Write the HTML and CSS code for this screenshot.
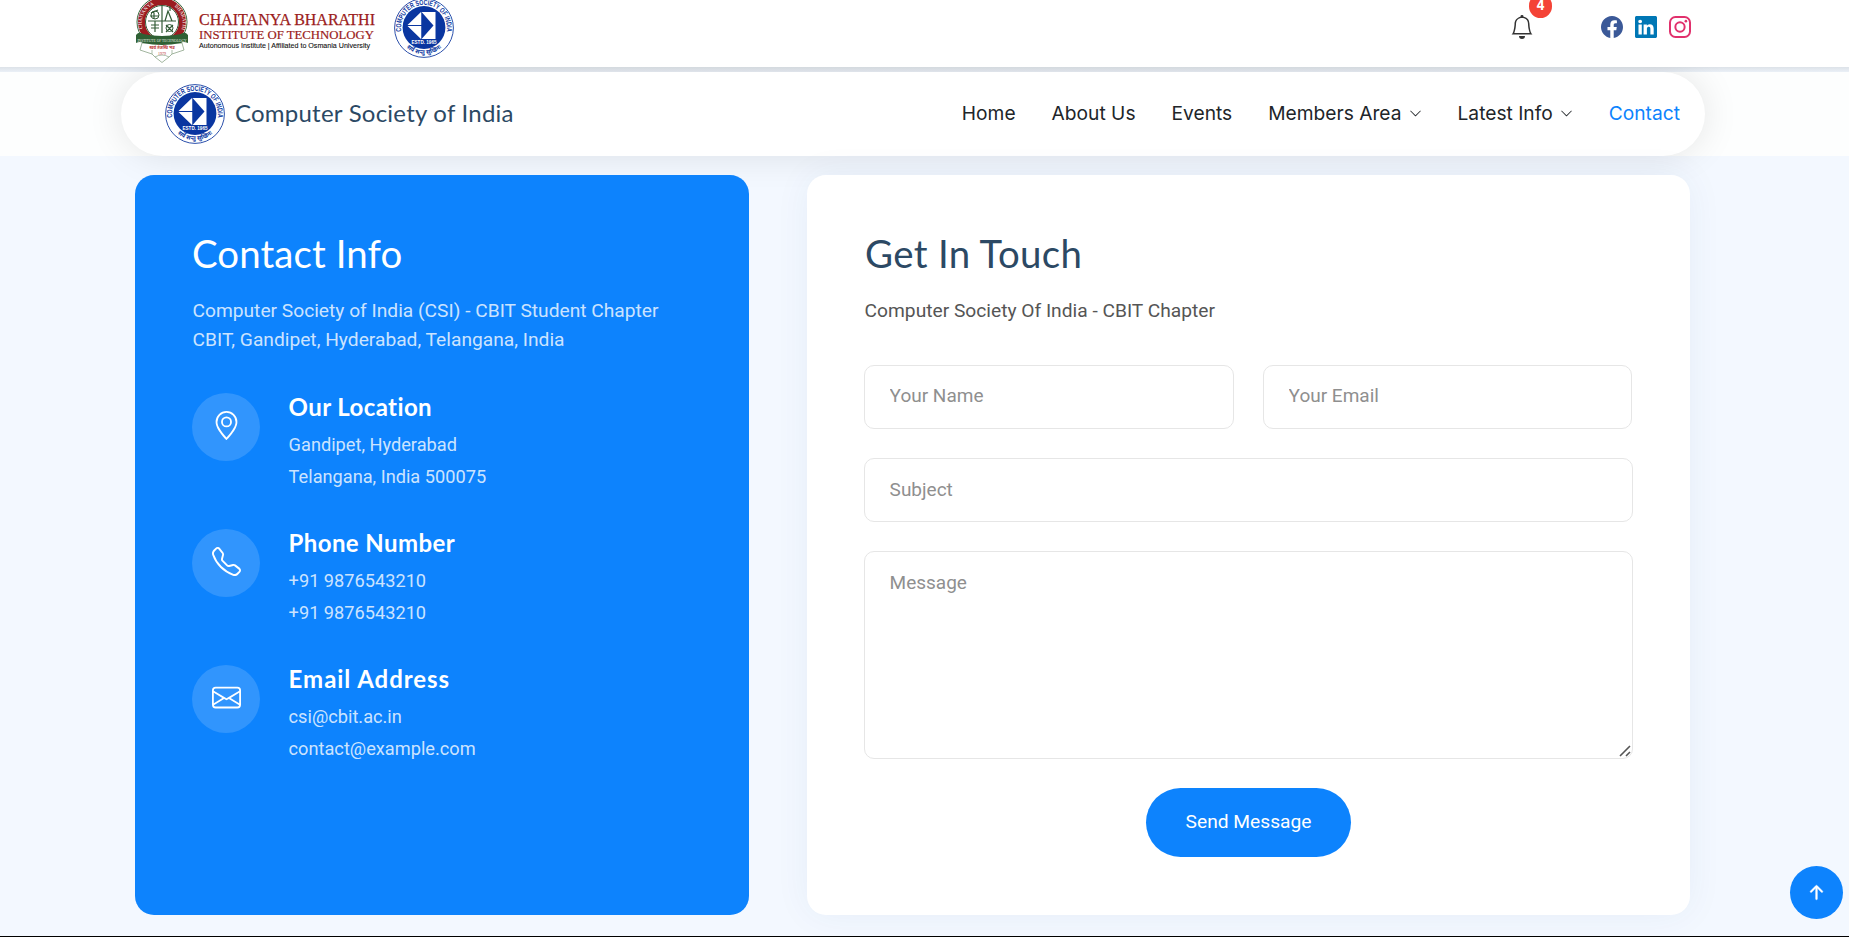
FILE: index.html
```html
<!DOCTYPE html>
<html lang="en">
<head>
<meta charset="utf-8">
<title>Contact - Computer Society of India</title>
<link rel="stylesheet" href="styles.css">
</head>
<body>
<svg width="0" height="0" class="defs" aria-hidden="true">
  <defs>
    <path id="ringTop" d="M7.400 33.500A22.900 22.900 0 1 1 52.600 33.500"/>
    <path id="ringBottom" d="M13 50A26.400 26.400 0 0 0 47 50"/>
    <symbol id="csi" viewBox="0 0 60 60">
      <circle cx="30" cy="30" r="29.4" fill="#fff" stroke="#2c50ab" stroke-width="1"/>
      <circle cx="30" cy="29.5" r="21.4" fill="#0a36a0"/>
      <path d="M13 27.5 27 14V41Z M27.6 14H41.500V41H27.600Z" fill="#fff"/>
      <path d="M27.600 14 39.500 27.500 27.600 41Z" fill="#0a36a0"/>
      <path d="M12 27.500H39" stroke="#0a36a0" stroke-width="1"/>
      <text x="30" y="46" class="csi-estd" text-anchor="middle">ESTD. 1965</text>
      <text class="csi-ring" textLength="79" lengthAdjust="spacingAndGlyphs"><textPath href="#ringTop" textLength="79" lengthAdjust="spacingAndGlyphs">COMPUTER SOCIETY OF INDIA</textPath></text>
      <text class="csi-hindi"><textPath href="#ringBottom" startOffset="50%" text-anchor="middle">सर्वे सन्तु सुखिनः</textPath></text>
    </symbol>
    <symbol id="chev" viewBox="0 0 16 16"><path fill="currentColor" fill-rule="evenodd" d="M1.646 4.646a.5.5 0 0 1 .708 0L8 10.293l5.646-5.647a.5.5 0 0 1 .708.708l-6 6a.5.5 0 0 1-.708 0l-6-6a.5.5 0 0 1 0-.708z"/></symbol>
  </defs>
</svg>

<header class="topbar">
  <div class="topbar-logos">
    <svg class="cbit-emblem" viewBox="0 0 54 66">
      <circle cx="27" cy="25" r="25" fill="#fff" stroke="#3c6b40" stroke-width="1"/>
      <circle cx="27" cy="25" r="20.500" fill="none" stroke="#9b1c20" stroke-width="7"/>
      <circle cx="27" cy="25" r="16.500" fill="#fff" stroke="#345d38" stroke-width="1"/>
      <path d="M27 8V36M13 24H41M19 14V22M15 19H24M33 14 30 24H37ZM35 9V14M16 28H24M16 31H24M20 24V35M31 28 38 35M38 28 31 35M16 16 23 13" fill="none" stroke="#345d38" stroke-width="1.200"/>
      <circle cx="34.500" cy="31" r="3.500" fill="none" stroke="#345d38"/>
      <circle cx="20" cy="18" r="4" fill="none" stroke="#345d38"/>
      <path id="arcL" d="M9.500 36A20 20 0 0 1 25 6" fill="none"/>
      <path id="arcR" d="M30 6A20 20 0 0 1 45 36" fill="none"/>
      <text class="emblem-arc"><textPath href="#arcL" startOffset="12%">CHAITANYA</textPath></text>
      <text class="emblem-arc"><textPath href="#arcR" startOffset="26%">BHARATHI</textPath></text>
      <path d="M7 46 5 53 17 57 20 60 27 65.500 34 60 37 57 49 53 47 46Z" fill="#fff" stroke="#8aa386" stroke-width=".8"/>
      <path d="M17 57 17 53M37 57 37 53M20 60Q27 56 34 60" fill="none" stroke="#8aa386" stroke-width=".7"/>
      <path d="M1 38Q4 34 8 37Q27 41 46 37Q50 34 53 38V46Q48 44 46 46Q27 50 8 46Q5 44 1 46Z" fill="#2f6034"/>
      <text x="27" y="44.800" class="emblem-band" text-anchor="middle">INSTITUTE OF TECHNOLOGY</text>
      <text x="27" y="52.300" class="emblem-motto" text-anchor="middle">स्वयं तेजस्वि भव</text>
      <text x="27" y="58" class="emblem-year" text-anchor="middle">1979</text>
    </svg>
    <svg class="cbit-name" viewBox="0 0 178 48" role="img" aria-label="Chaitanya Bharathi Institute of Technology">
      <text x="0" y="22.300" class="cbit-line1" textLength="176" lengthAdjust="spacingAndGlyphs">CHAITANYA BHARATHI</text>
      <text x="0" y="36" class="cbit-line2" textLength="175" lengthAdjust="spacingAndGlyphs">INSTITUTE OF TECHNOLOGY</text>
      <text x="0" y="44.500" class="cbit-line3" textLength="171" lengthAdjust="spacingAndGlyphs">Autonomous Institute | Affiliated to Osmania University</text>
    </svg>
    <svg class="csi-logo"><use href="#csi"/></svg>
  </div>
  <div class="topbar-actions">
    <div class="bell">
      <svg viewBox="0 0 16 16" fill="#333"><path d="M8 16a2 2 0 0 0 2-2H6a2 2 0 0 0 2 2zM8 1.918l-.797.161A4.002 4.002 0 0 0 4 6c0 .628-.134 2.197-.459 3.742-.16.767-.376 1.566-.663 2.258h10.244c-.287-.692-.502-1.490-.663-2.258C12.134 8.197 12 6.628 12 6a4.002 4.002 0 0 0-3.203-3.920L8 1.917zM14.220 12c.223.447.481.801.780 1H1c.299-.199.557-.553.780-1C2.680 10.200 3 6.880 3 6c0-2.420 1.720-4.440 4.005-4.901a1 1 0 1 1 1.990 0A5.002 5.002 0 0 1 13 6c0 .880.320 4.200 1.220 6z"/></svg>
      <span class="badge">4</span>
    </div>
    <div class="social">
      <svg viewBox="0 0 16 16" fill="#3b5998"><path d="M16 8.049c0-4.446-3.582-8.050-8-8.050C3.580 0-.002 3.603-.002 8.050c0 4.017 2.926 7.347 6.750 7.951v-5.625h-2.030V8.050H6.750V6.275c0-2.017 1.195-3.131 3.022-3.131.876 0 1.791.157 1.791.157v1.980h-1.009c-.993 0-1.303.621-1.303 1.258v1.510h2.218l-.354 2.326H9.250V16c3.824-.604 6.750-3.934 6.750-7.951z"/></svg>
      <svg viewBox="0 0 16 16" fill="#0077b5"><path d="M0 1.146C0 .513.526 0 1.175 0h13.650C15.474 0 16 .513 16 1.146v13.708c0 .633-.526 1.146-1.175 1.146H1.175C.526 16 0 15.487 0 14.854V1.146zm4.943 12.248V6.169H2.542v7.225h2.401zm-1.200-8.212c.837 0 1.358-.554 1.358-1.248-.015-.709-.520-1.248-1.342-1.248-.822 0-1.359.540-1.359 1.248 0 .694.521 1.248 1.327 1.248h.016zm4.908 8.212V9.359c0-.216.016-.432.080-.586.173-.431.568-.878 1.232-.878.869 0 1.216.662 1.216 1.634v3.865h2.401V9.250c0-2.220-1.184-3.252-2.764-3.252-1.274 0-1.845.700-2.165 1.193v.025h-.016l.016-.025V6.169h-2.400c.030.678 0 7.225 0 7.225h2.400z"/></svg>
      <svg viewBox="0 0 16 16" fill="none" stroke="#e1306c" stroke-width="1.440"><rect x=".720" y=".720" width="14.560" height="14.560" rx="4"/><circle cx="8" cy="8" r="3.390"/><circle cx="12.270" cy="3.730" r=".960" fill="#e1306c" stroke="none"/></svg>
    </div>
  </div>
</header>

<div class="nav-band">
  <nav class="nav">
    <div class="brand">
      <svg class="csi-logo"><use href="#csi"/></svg>
      <span class="brand-name">Computer Society of India</span>
    </div>
    <ul class="menu">
      <li>Home</li>
      <li>About Us</li>
      <li>Events</li>
      <li>Members Area<svg class="chev"><use href="#chev"/></svg></li>
      <li>Latest Info<svg class="chev"><use href="#chev"/></svg></li>
      <li class="active">Contact</li>
    </ul>
  </nav>
</div>

<main class="contact">
  <section class="info">
    <h2 class="title title-info">Contact Info</h2>
    <p class="lead">Computer Society of India (CSI) - CBIT Student Chapter<br>CBIT, Gandipet, Hyderabad, Telangana, India</p>
    <div class="item">
      <div class="circle"><svg viewBox="0 0 16 16" fill="#fff"><path d="M12.166 8.940c-.524 1.062-1.234 2.120-1.960 3.070A31.493 31.493 0 0 1 8 14.580a31.481 31.481 0 0 1-2.206-2.570c-.726-.950-1.436-2.008-1.960-3.070C3.304 7.867 3 6.862 3 6a5 5 0 0 1 10 0c0 .862-.305 1.867-.834 2.940zM8 16s6-5.686 6-10A6 6 0 0 0 2 6c0 4.314 6 10 6 10z"/><path d="M8 8a2 2 0 1 1 0-4 2 2 0 0 1 0 4zm0 1a3 3 0 1 0 0-6 3 3 0 0 0 0 6z"/></svg></div>
      <div class="item-text"><h4 class="t1">Our Location</h4><p>Gandipet, Hyderabad</p><p>Telangana, India 500075</p></div>
    </div>
    <div class="item">
      <div class="circle"><svg viewBox="0 0 16 16" fill="#fff"><path d="M3.654 1.328a.678.678 0 0 0-1.015-.063L1.605 2.300c-.483.484-.661 1.169-.450 1.770a17.568 17.568 0 0 0 4.168 6.608 17.569 17.569 0 0 0 6.608 4.168c.601.211 1.286.033 1.770-.450l1.034-1.034a.678.678 0 0 0-.063-1.015l-2.307-1.794a.678.678 0 0 0-.580-.122l-2.190.547a1.745 1.745 0 0 1-1.657-.459L5.482 8.062a1.745 1.745 0 0 1-.460-1.657l.548-2.190a.678.678 0 0 0-.122-.580L3.654 1.328zM1.884.511a1.745 1.745 0 0 1 2.612.163L6.290 2.980c.329.423.445.974.315 1.494l-.547 2.190a.678.678 0 0 0 .178.643l2.457 2.457a.678.678 0 0 0 .644.178l2.189-.547a1.745 1.745 0 0 1 1.494.315l2.306 1.794c.829.645.905 1.870.163 2.611l-1.034 1.034c-.740.740-1.846 1.065-2.877.702a18.634 18.634 0 0 1-7.010-4.420 18.634 18.634 0 0 1-4.420-7.009c-.362-1.030-.037-2.137.703-2.877L1.885.511z"/></svg></div>
      <div class="item-text"><h4 class="t2">Phone Number</h4><p>+91 9876543210</p><p>+91 9876543210</p></div>
    </div>
    <div class="item">
      <div class="circle"><svg viewBox="0 0 16 16" fill="#fff"><path d="M0 4a2 2 0 0 1 2-2h12a2 2 0 0 1 2 2v8a2 2 0 0 1-2 2H2a2 2 0 0 1-2-2V4Zm2-1a1 1 0 0 0-1 1v.217l7 4.200 7-4.200V4a1 1 0 0 0-1-1H2Zm13 2.383-4.708 2.825L15 11.105V5.383Zm-.034 6.876-5.640-3.471L8 9.583l-1.326-.795-5.640 3.470A1 1 0 0 0 2 13h12a1 1 0 0 0 .966-.741ZM1 11.105l4.708-2.897L1 5.383v5.722Z"/></svg></div>
      <div class="item-text"><h4 class="t3">Email Address</h4><p>csi@cbit.ac.in</p><p>contact@example.com</p></div>
    </div>
  </section>

  <section class="touch">
    <h2 class="title title-touch">Get In Touch</h2>
    <p class="sub">Computer Society Of India - CBIT Chapter</p>
    <form class="form">
      <div class="row">
        <input class="field" type="text" placeholder="Your Name">
        <input class="field" type="email" placeholder="Your Email">
      </div>
      <input class="field subject" type="text" placeholder="Subject">
      <div class="area-wrap">
        <textarea class="field area" placeholder="Message"></textarea>
        <svg class="grip" viewBox="0 0 12 12"><path d="M1 11 11 1M7 11 11 7" stroke="#555" stroke-width="1.600" fill="none"/></svg>
      </div>
      <button class="send" type="button">Send Message</button>
    </form>
  </section>
</main>
<div class="to-top"><svg viewBox="0 0 16 16" fill="#fff" stroke="#fff" stroke-width=".2"><path d="M8 12a.5.5 0 0 0 .5-.5V5.707l2.146 2.147a.5.5 0 0 0 .708-.708l-3-3a.5.5 0 0 0-.708 0l-3 3a.5.5 0 1 0 .708.708L7.500 5.707V11.500a.5.5 0 0 0 .5.500z"/></svg></div>
</body>
</html>
```

FILE: styles.css
```css
* { box-sizing: border-box; }
body {
  margin: 0;
  height: 937px;
  overflow: hidden;
  position: relative;
  background: #f3f8ff;
  font-family: Roboto, "Liberation Sans", sans-serif;
  border-bottom: 1px solid #000;
}
.defs { position: absolute; }
h2, h4, p, ul { margin: 0; padding: 0; }

.topbar {
  position: relative;
  z-index: 2;
  height: 67px;
  padding: 0 158px 0 135px;
  display: flex;
  justify-content: space-between;
  background: #fff;
}
.topbar-logos { display: flex; align-items: flex-start; }
.cbit-emblem { width: 54px; height: 66px; margin-top: -3px; }
.cbit-name { width: 178px; height: 48px; margin: 3px 0 0 10px; overflow: visible; }
.csi-logo { width: 60px; height: 60px; flex: none; }
.topbar .csi-logo { margin: -2px 0 0 17px; }
.cbit-line1 { font: 17px "Liberation Serif", serif; fill: #9b1c20; stroke: #9b1c20; stroke-width: .25px; }
.cbit-line2 { font: 12.5px "Liberation Serif", serif; fill: #9b1c20; stroke: #9b1c20; stroke-width: .2px; }
.cbit-line3 { font: 7px "Liberation Sans", sans-serif; fill: #111; stroke: #111; stroke-width: .1px; }
.emblem-arc { font: 5px "Liberation Serif", serif; fill: #fff; }
.emblem-band { font: 3.6px "Liberation Serif", serif; fill: #e4eee2; }
.emblem-motto { font: bold 4px "Noto Sans", sans-serif; fill: #b33; }
.emblem-year { font: 4px "Liberation Serif", serif; fill: #b33; }
.csi-estd { font: bold 4.6px "Liberation Sans", sans-serif; fill: #fff; }
.csi-ring { font: bold 7.4px "Liberation Sans Narrow", "Liberation Sans", sans-serif; fill: #0a36a0; }
.csi-hindi { font: bold 6px "Noto Sans", sans-serif; fill: #0a36a0; }

.topbar-actions { display: flex; }
.bell { position: relative; margin: 15px 67px 0 0; width: 24px; height: 24px; }
.bell svg { display: block; width: 24px; height: 24px; }
.badge {
  position: absolute;
  left: 19px;
  top: -21px;
  width: 23px;
  height: 24px;
  border-radius: 12px;
  background: #f44336;
  color: #fff;
  font: 700 14px/22px Roboto, sans-serif;
  text-align: center;
}
.social { display: flex; gap: 12px; padding-top: 16px; }
.social svg { width: 22px; height: 22px; }

.nav-band {
  height: 89px;
  padding: 5px 144px 0 121px;
  background: linear-gradient(#dde2e8, #eaf0f7 5px, #fdfefe 5px);
}
.nav {
  height: 84px;
  padding: 0 25px 2px 44px;
  display: flex;
  align-items: center;
  justify-content: space-between;
  border-radius: 60px;
  background: #fff;
  box-shadow: 0 0 36px rgba(0, 0, 0, .1);
}
.brand { display: flex; align-items: center; gap: 10px; }
.brand .csi-logo { position: relative; top: 1px; }
.brand-name { font: 24px/30px Lato, sans-serif; color: #2c4964; letter-spacing: .23px; }
.menu { display: flex; gap: 36px; list-style: none; font: 19.2px/28px Inter, sans-serif; color: #212529; }
.menu li { display: flex; align-items: center; }
.chev { width: 13px; height: 13px; margin-left: 7px; }
.menu .active { color: #0d83fd; }

.contact {
  display: grid;
  grid-template-columns: 614px 883px;
  gap: 58px;
  padding: 19px 0 0 135px;
}
.info, .touch { height: 740px; border-radius: 19px; padding: 55px 57px; }
.info { background: #0d83fd; color: #fff; }
.touch { background: #fff; box-shadow: 0 0 36px rgba(13, 60, 140, .06); }
.title { font: 38.4px/46px Lato, sans-serif; }
.title-info { letter-spacing: .1px; }
.title-touch { color: #2c4964; letter-spacing: .35px; padding-left: 1px; }
.lead { margin-top: 21px; height: 58px; font-size: 19.2px; line-height: 28.8px; color: rgba(255, 255, 255, .8); white-space: nowrap; padding-left: .5px; }
.item { display: flex; gap: 28.6px; height: 136px; }
.lead + .item { margin-top: 38px; }
.circle { width: 68px; height: 68px; flex: none; border-radius: 50%; background: rgba(255, 255, 255, .15); display: flex; align-items: center; justify-content: center; }
.circle svg { width: 29px; height: 29px; margin-top: -3px; }
.item-text h4 { font: 700 24px/29px Lato, sans-serif; margin: -1px 0 8px; }
.item-text .t1 { letter-spacing: .4px; }
.item-text .t2 { letter-spacing: .4px; }
.item-text .t3 { letter-spacing: .95px; }
.item-text p { font-size: 18.2px; line-height: 32px; color: rgba(255, 255, 255, .8); }

.sub { margin-top: 20px; font-size: 19.2px; line-height: 29px; color: #555; padding-left: .6px; }
.form { margin-top: 40px; display: flex; flex-direction: column; gap: 29px; width: 769px; }
.row { display: grid; grid-template-columns: 370px 369px; gap: 29px; }
.field {
  width: 100%;
  height: 64px;
  padding: 0 24.6px 4px;
  border: 1px solid #e6e6e6;
  border-radius: 10px;
  background: #fff;
  color: #444;
  font: 19px Roboto, sans-serif;
  outline: none;
}
.subject { padding-bottom: 2px; }
.field::placeholder { color: #8f8f8f; opacity: 1; }
.area-wrap { position: relative; height: 208px; }
.area { height: 208px; padding: 19px 24.6px; display: block; resize: none; }
.grip { position: absolute; right: 2px; bottom: 2px; width: 12px; height: 12px; }
.send {
  align-self: center;
  width: 205px;
  height: 69px;
  padding: 0 0 3px;
  border: 0;
  border-radius: 60px;
  background: #0d83fd;
  color: #fff;
  font: 19.2px Roboto, sans-serif;
}
.to-top {
  position: absolute;
  right: 6px;
  bottom: 17px;
  width: 53px;
  height: 53px;
  border-radius: 50%;
  background: #0d83fd;
  display: flex;
  align-items: center;
  justify-content: center;
}
.to-top svg { width: 29px; height: 29px; }
```
